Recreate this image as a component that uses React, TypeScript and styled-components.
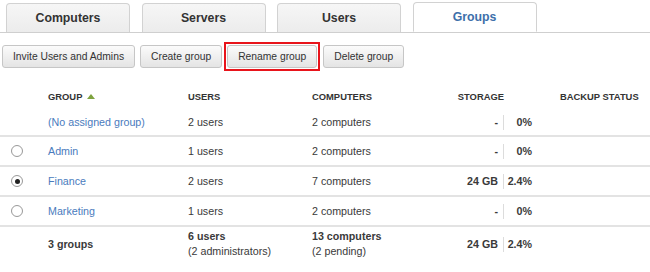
import React from "react";
import styled, { createGlobalStyle } from "styled-components";

const GlobalStyle = createGlobalStyle`
  body {
    margin: 0;
    background: #ffffff;
    font-family: "Liberation Sans", Arial, sans-serif;
    color: #333333;
  }
`;

const Page = styled.div`
  width: 650px;
  height: 272px;
  overflow: hidden;
`;

const TabBar = styled.div`
  display: flex;
  gap: 11.5px;
  padding: 3px 0 0 6px;
  height: 29px;
  border-bottom: 1px solid #cfcfcf;
`;

const Tab = styled.div<{ $active?: boolean }>`
  width: 124px;
  box-sizing: border-box;
  display: flex;
  align-items: center;
  justify-content: center;
  border: 1px solid #d2d2d2;
  border-bottom: ${p => (p.$active ? "1px solid #ffffff" : "none")};
  border-radius: 4px 4px 0 0;
  background: ${p => (p.$active ? "#ffffff" : "linear-gradient(#f6f6f6, #ececec)")};
  color: ${p => (p.$active ? "#3d6faa" : "#333333")};
  font-weight: bold;
  font-size: 12.3px;
  margin-top: ${p => (p.$active ? "-1px" : "0")};
  height: ${p => (p.$active ? "30px" : "29px")};
`;

const Toolbar = styled.div`
  display: flex;
  gap: 5px;
  padding: 9px 0 0 2px;
  align-items: center;
`;

const Highlight = styled.div`
  border: 2px solid #e8141b;
  padding: 1px;
  margin: 0 -2px 0 -3px;
  display: flex;
`;

const Button = styled.button`
  height: 23px;
  margin: 0;
  padding: 0 10px;
  font-family: "Liberation Sans", Arial, sans-serif;
  font-size: 10.3px;
  color: #333333;
  border: 1px solid #c6c6c6;
  border-radius: 3px;
  background: linear-gradient(#fbfbfb, #e4e4e4);
`;

const Table = styled.div`
  margin-top: 13px;
  font-size: 10.7px;
`;

const Row = styled.div<{ $height: number; $border?: boolean }>`
  display: grid;
  grid-template-columns: 48px 140px 124px 128px 92px 28px 1fr;
  align-items: center;
  height: ${p => p.$height}px;
  border-bottom: ${p => (p.$border ? "2px solid #e3e3e3" : "none")};
`;

const HeadCell = styled.div<{ $right?: boolean }>`
  font-size: 9.4px;
  font-weight: bold;
  color: #333333;
  display: flex;
  align-items: center;
  gap: 5px;
  justify-content: ${p => (p.$right ? "flex-end" : "flex-start")};
  padding-right: ${p => (p.$right ? "28px" : "0")};
`;

const SortArrow = styled.span`
  width: 0;
  height: 0;
  border-left: 4px solid transparent;
  border-right: 4px solid transparent;
  border-bottom: 5px solid #7ea33f;
  margin-top: -1px;
`;

const Cell = styled.div<{ $bold?: boolean }>`
  font-weight: ${p => (p.$bold ? "bold" : "normal")};
  line-height: 15px;
  color: #3a3a3a;
`;

const GroupLink = styled.a`
  color: #4a7bbd;
  text-decoration: none;
`;

const RadioCell = styled.div`
  padding-left: 11px;
  display: flex;
  align-items: center;
`;

const Radio = styled.span<{ $checked?: boolean }>`
  width: 12px;
  height: 12px;
  box-sizing: border-box;
  border-radius: 50%;
  border: 1px solid #9a9a9a;
  background: radial-gradient(circle, #ffffff 60%, #ececec);
  display: flex;
  align-items: center;
  justify-content: center;
  &::after {
    content: "";
    width: 5px;
    height: 5px;
    border-radius: 50%;
    background: ${p => (p.$checked ? "#222222" : "transparent")};
  }
`;

const StorageCell = styled.div`
  grid-column: span 2;
  display: flex;
  align-items: center;
  font-weight: bold;
  color: #3a3a3a;
`;

const StorageValue = styled.span`
  width: 64px;
  box-sizing: border-box;
  text-align: right;
  padding-right: 5px;
  border-right: 1px solid #dcdcdc;
  line-height: 15px;
`;

const StoragePct = styled.span`
  width: 28px;
  text-align: right;
`;

type Group = {
  name: string;
  users: string;
  computers: string;
  storage: string;
  pct: string;
  radio?: "on" | "off";
};

const groups: Group[] = [
  { name: "(No assigned group)", users: "2 users", computers: "2 computers", storage: "-", pct: "0%" },
  { name: "Admin", users: "1 users", computers: "2 computers", storage: "-", pct: "0%", radio: "off" },
  { name: "Finance", users: "2 users", computers: "7 computers", storage: "24 GB", pct: "2.4%", radio: "on" },
  { name: "Marketing", users: "1 users", computers: "2 computers", storage: "-", pct: "0%", radio: "off" },
];

const App: React.FC = () => {
  return (
    <Page>
      <GlobalStyle />
      <TabBar>
        <Tab>Computers</Tab>
        <Tab>Servers</Tab>
        <Tab>Users</Tab>
        <Tab $active>Groups</Tab>
      </TabBar>
      <Toolbar>
        <Button>Invite Users and Admins</Button>
        <Button>Create group</Button>
        <Highlight>
          <Button>Rename group</Button>
        </Highlight>
        <Button>Delete group</Button>
      </Toolbar>
      <Table>
        <Row $height={25}>
          <div />
          <HeadCell>
            GROUP <SortArrow />
          </HeadCell>
          <HeadCell>USERS</HeadCell>
          <HeadCell>COMPUTERS</HeadCell>
          <HeadCell $right>STORAGE</HeadCell>
          <div />
          <HeadCell>BACKUP STATUS</HeadCell>
        </Row>
        {groups.map((g, i) => (
          <Row key={g.name} $height={i === 0 ? 26 : 28} $border>
            <RadioCell>{g.radio && <Radio $checked={g.radio === "on"} />}</RadioCell>
            <Cell>
              <GroupLink href="#">{g.name}</GroupLink>
            </Cell>
            <Cell>{g.users}</Cell>
            <Cell>{g.computers}</Cell>
            <StorageCell>
              <StorageValue>{g.storage}</StorageValue>
              <StoragePct>{g.pct}</StoragePct>
            </StorageCell>
            <div />
          </Row>
        ))}
        <Row $height={34}>
          <div />
          <Cell $bold>3 groups</Cell>
          <Cell>
            <b>6 users</b>
            <br />
            (2 administrators)
          </Cell>
          <Cell>
            <b>13 computers</b>
            <br />
            (2 pending)
          </Cell>
          <StorageCell>
            <StorageValue>24 GB</StorageValue>
            <StoragePct>2.4%</StoragePct>
          </StorageCell>
          <div />
        </Row>
      </Table>
    </Page>
  );
};

export default App;
